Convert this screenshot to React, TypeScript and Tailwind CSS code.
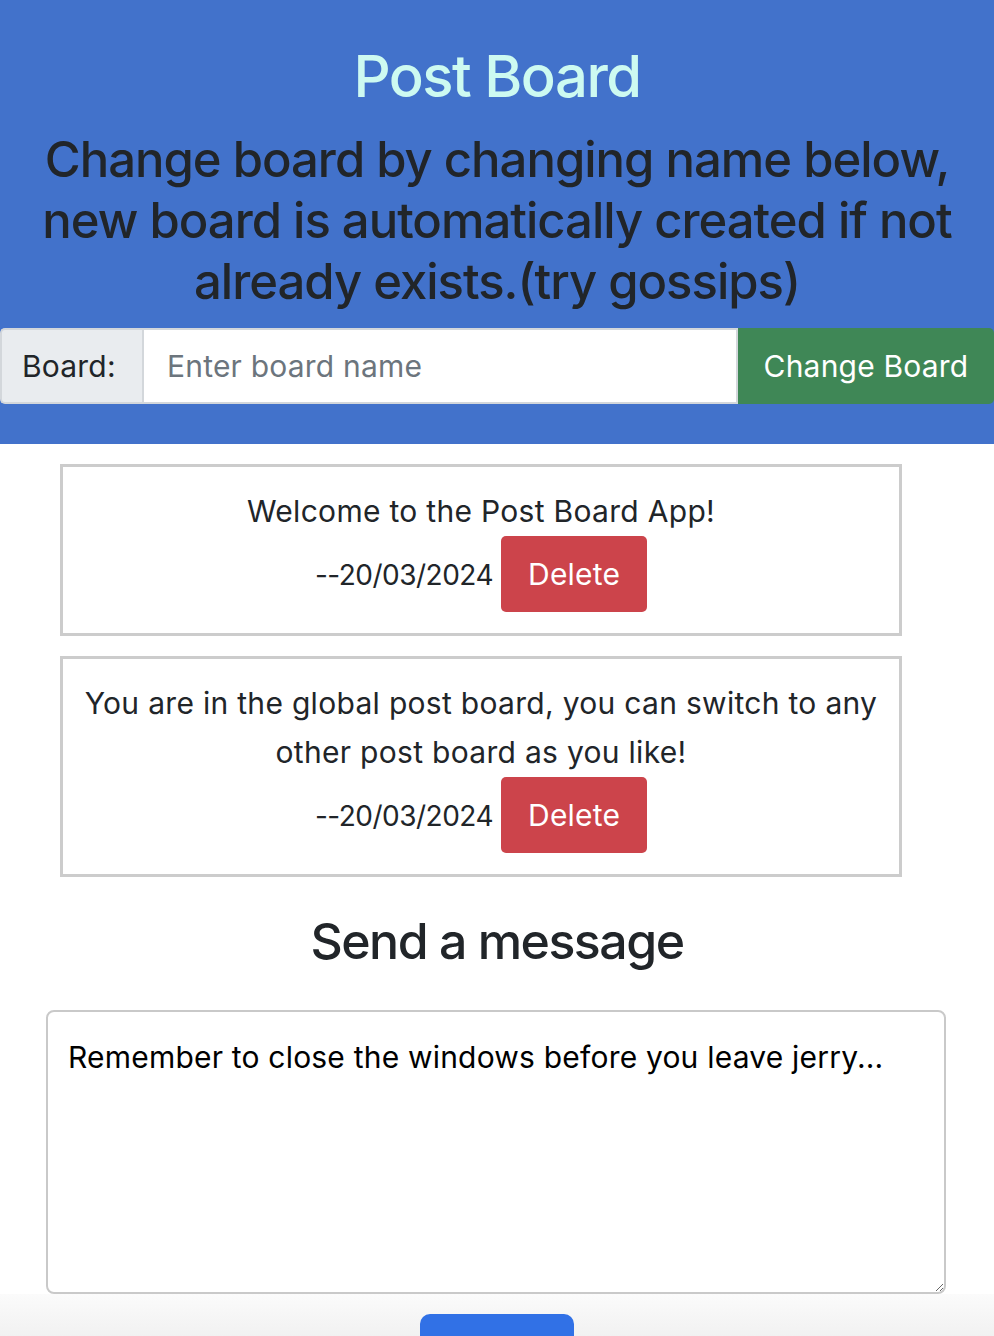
import React from "react";

const posts = [
  { id: 1, text: ["Welcome to the Post Board App!"], date: "20/03/2024" },
  {
    id: 2,
    text: ["You are in the global post board, you can switch to any", "other post board as you like!"],
    date: "20/03/2024",
  },
];

export default function App() {
  return (
    <div className="h-[1336px] overflow-hidden bg-white text-[#212529] font-['Inter',sans-serif]">
      <header className="bg-[#4272cb] pt-[41px] pb-[40px]">
        <h1 className="text-center text-[58px] leading-[70px] font-medium text-[#cdfaf1] tracking-[-1.5px]">
          Post Board
        </h1>
        <h3 className="mt-[18px] text-center text-[49px] leading-[61px] font-medium tracking-[-1px]">
          Change board by changing name below,
          <br />
          new board is automatically created if not
          <br />
          already exists.(try gossips)
        </h3>
        <div className="mt-[16px] flex h-[76px] text-[30px]">
          <span className="flex w-[142px] items-center rounded-l-[5px] border-2 border-r-0 border-[#d3d7db] bg-[#e9ecef] pl-[20px] tracking-[0.2px]">
            Board:
          </span>
          <input
            className="min-w-0 flex-1 border-2 border-[#d3d7db] bg-white pl-[23px] text-[30px] tracking-[0.2px] text-[#212529] placeholder:text-[#6c757d] outline-none"
            placeholder="Enter board name"
          />
          <button className="w-[256px] rounded-r-[5px] bg-[#3f8756] text-center tracking-[0.2px] text-white">
            Change Board
          </button>
        </div>
      </header>

      <main className="ml-[60px] w-[842px] pt-[20px]">
        <div className="flex flex-col gap-[20px]">
          {posts.map((p) => (
            <div key={p.id} className="border-[3px] border-[#cccccc] px-3 pt-[20px] pb-[21px] text-center text-[30px] leading-[49px] tracking-[0.3px]">
              {p.text.map((line, i) => (
                <p key={i}>{line}</p>
              ))}
              <div className="flex items-baseline justify-center gap-[8px]">
                <span className="text-[28px] tracking-[-0.5px]">--{p.date}</span>
                <button className="h-[76px] w-[146px] rounded-[5px] bg-[#cc444b] text-[30px] leading-[42px] tracking-[0.2px] text-white">
                  Delete
                </button>
              </div>
            </div>
          ))}
        </div>
      </main>

      <h2 className="mt-[34px] text-center text-[50px] leading-[60px] font-medium tracking-[-1.5px]">
        Send a message
      </h2>

      <div className="mt-[39px] px-[46px]">
        <textarea
          className="block h-[284px] w-[900px] rounded-lg border-2 border-[#c9c9c9] bg-white px-[20px] pt-[24px] text-[30px] leading-[42px] tracking-[0.2px] text-black outline-none"
          defaultValue="Remember to close the windows before you leave jerry..."
        />
      </div>

      <div className="flex h-[60px] justify-center bg-gradient-to-b from-[#fbfbfb] to-[#ededed] pt-[20px]">
        <button className="h-[60px] w-[154px] rounded-t-[10px] bg-[#3171e6]"></button>
      </div>
    </div>
  );
}
